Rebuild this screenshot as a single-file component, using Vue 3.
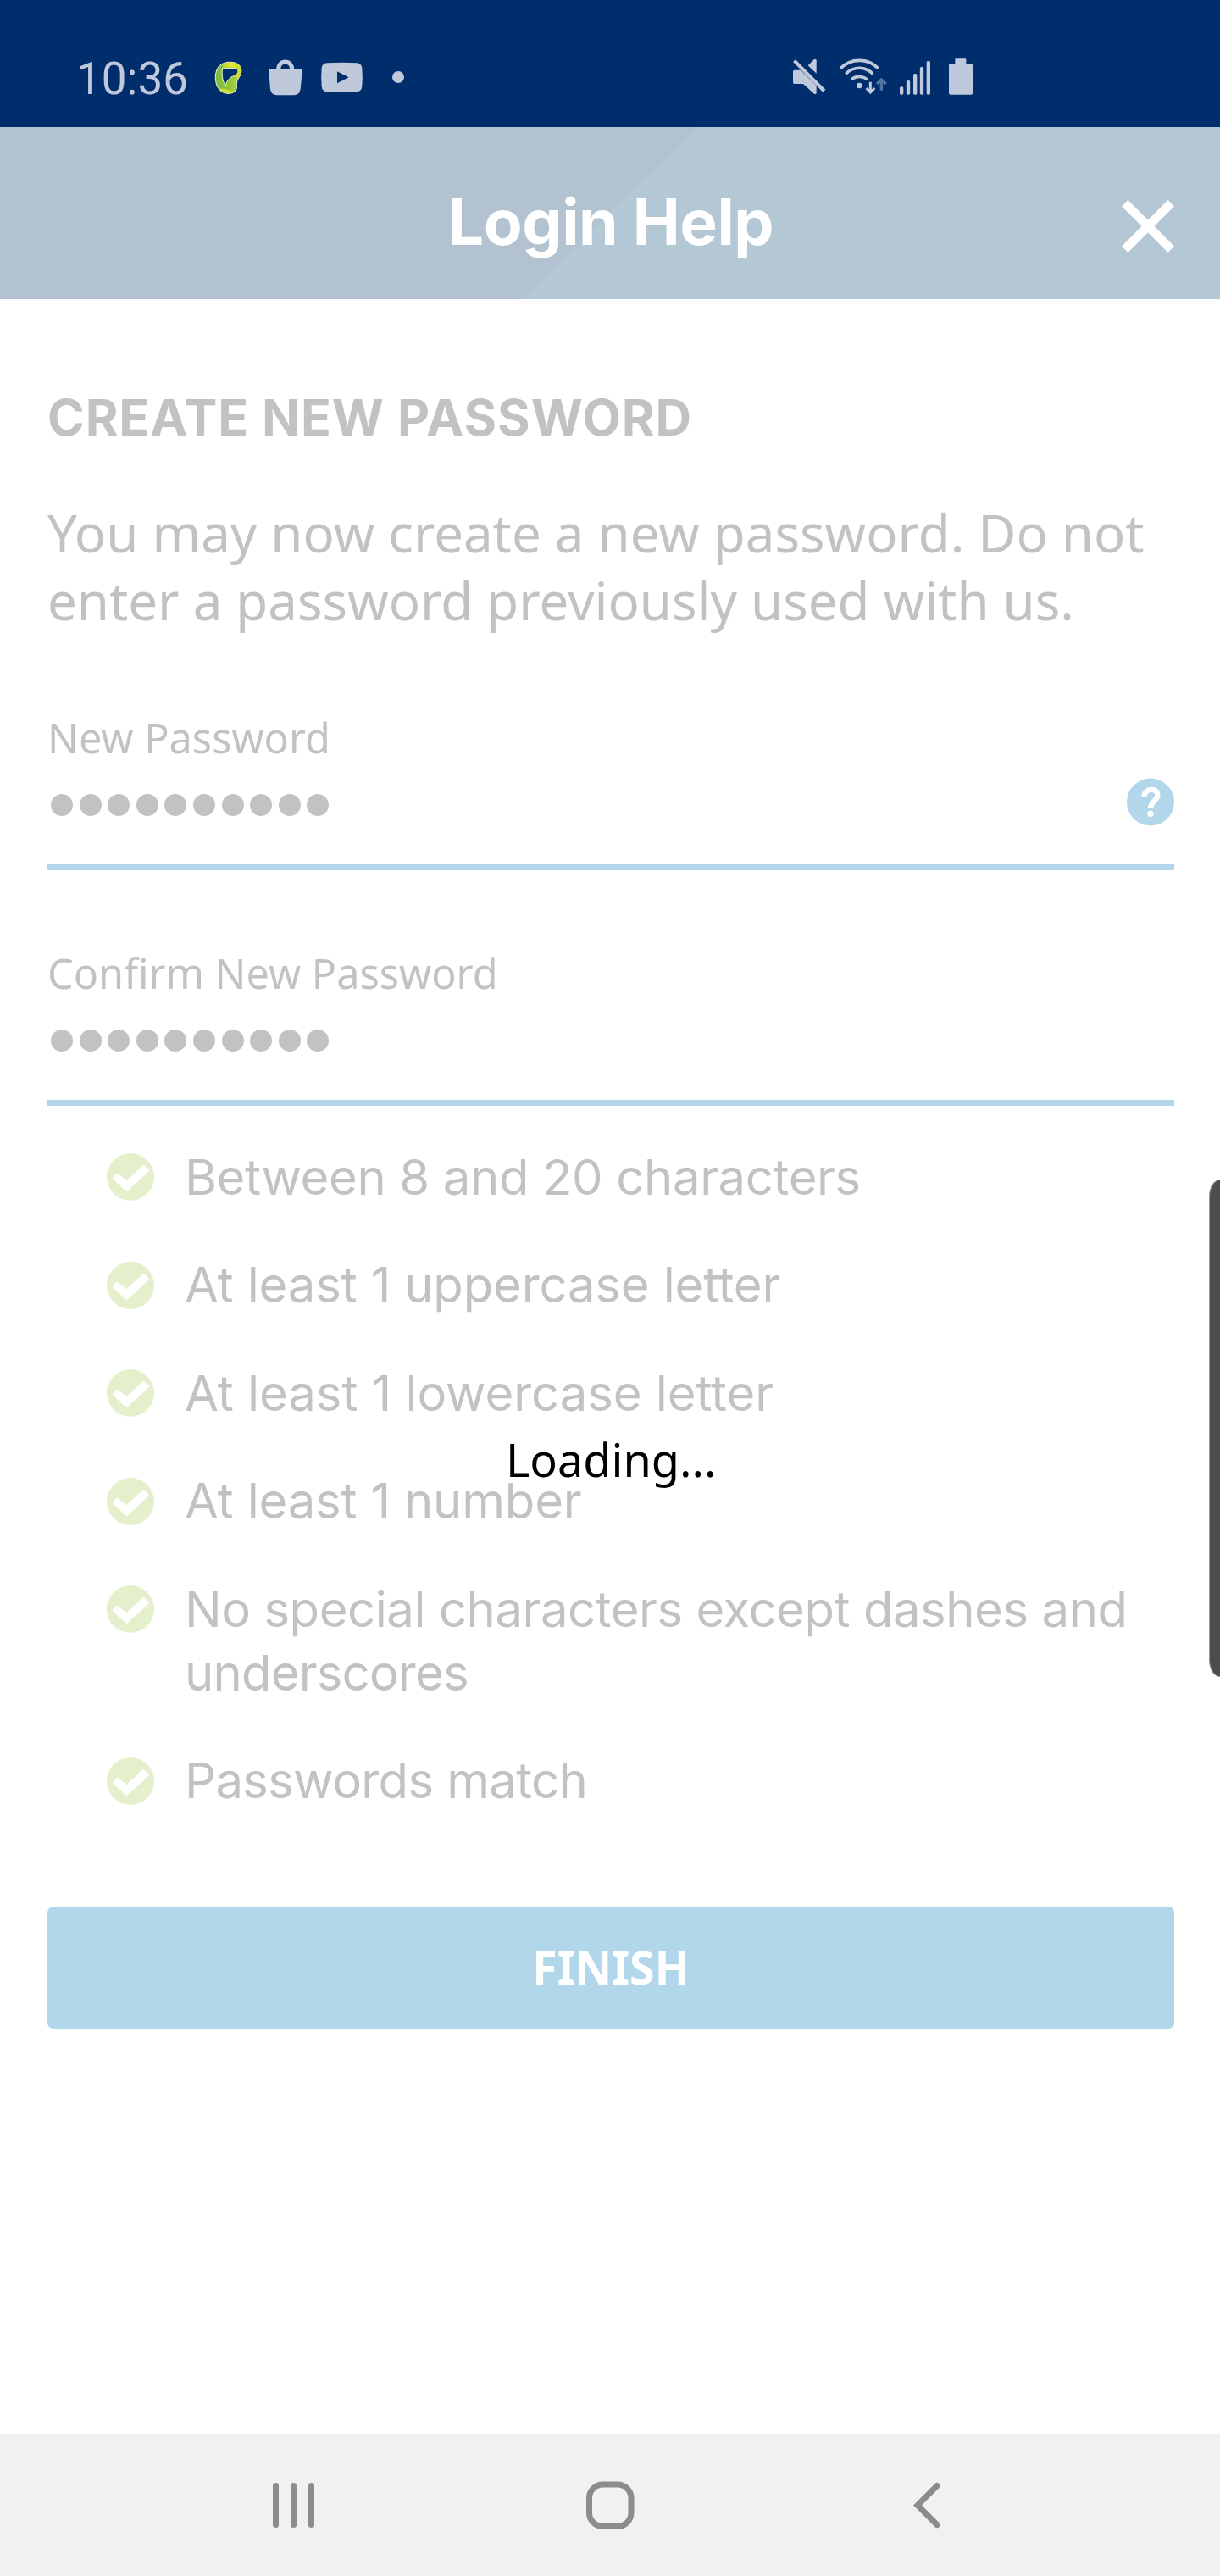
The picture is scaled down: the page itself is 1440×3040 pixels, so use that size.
<script setup>
const rules = [
  [{ text: 'Between 8 and 20 characters', tracking: -0.36 }],
  [{ text: 'At least 1 uppercase letter', tracking: -0.16 }],
  [{ text: 'At least 1 lowercase letter', tracking: -0.05 }],
  [{ text: 'At least 1 number', tracking: -0.18 }],
  [
    { text: 'No special characters except dashes and', tracking: -0.45 },
    { text: 'underscores', tracking: -0.8 },
  ],
  [{ text: 'Passwords match', tracking: -0.62 }],
]

const fields = [
  { label: 'New Password', length: 10, help: true },
  { label: 'Confirm New Password', length: 10, help: false },
]
</script>

<template>
  <div class="screen">
    <div class="status">
      <span class="clock">10:36</span>
      <svg class="logo" width="36" height="60" viewBox="576 69 108 180">
        <defs>
          <linearGradient id="ring" x1="0" y1="0" x2="1" y2="0">
            <stop offset="0" stop-color="#7dbb42" />
            <stop offset="0.5" stop-color="#8fc43f" />
            <stop offset="1" stop-color="#b5d334" />
          </linearGradient>
          <linearGradient id="fold" x1="0" y1="0" x2="1" y2="0">
            <stop offset="0" stop-color="#a8cf38" />
            <stop offset="0.45" stop-color="#e6e72e" />
            <stop offset="1" stop-color="#c9dc30" />
          </linearGradient>
        </defs>
        <path fill="url(#ring)" stroke="#eef5cf" stroke-width="3" fill-rule="evenodd" d="M612 104C622 98 650 98 661 106C673 113 676 124 674 138C672 152 658 160 658 174C658 184 660 192 655 200C648 209 636 212 624 211C598 208 583 186 583 155C583 128 593 110 612 104ZM608 122L657 122Q664 124 663 135C661 145 643 149 635 156C624 165 621 172 619 184C606 165 605 140 608 122Z" />
        <path fill="url(#fold)" d="M606 108C616 99 650 99 660 107C672 114 674 124 672 137C670 147 664 152 660 158L652 149C663 143 667 133 661 119L610 118Z" />
        <path fill="#cfdf2f" d="M592 189C604 199 614 190 630 199C640 204 650 202 656 196C652 206 640 210 624 209C610 207 600 201 592 189Z" />
      </svg>
      <svg class="bag" width="42" height="60" viewBox="768 69 126 180">
        <path fill="none" stroke="#bfc9db" stroke-width="15" d="M806 128C804 89 856 89 854 128" />
        <path fill="#bfc9db" d="M771 124H891L884 195Q881 217 862 217H800Q780 217 777 195Z" />
      </svg>
      <svg class="tube" width="51" height="60" viewBox="954 69 153 180">
        <path fill="#bfc9db" fill-rule="evenodd" d="M978 103Q1030 100 1083 103Q1100 104 1102 121Q1105 154 1102 187Q1100 204 1083 205Q1030 208 978 205Q961 204 959 187Q956 154 959 121Q961 104 978 103ZM1014 133V175L1055 154Z" />
      </svg>
      <svg class="more" width="16" height="60" viewBox="1206 69 48 180">
        <circle cx="1230" cy="153" r="21" fill="#bfc9db" />
      </svg>

      <svg class="mute" width="40" height="60" viewBox="105 69 120 180" fill="#bfc9db">
        <path d="M117 91L223 197L214 206L108 99Z" />
        <path d="M113 128H135L191 184V209Q190 215 183 212L144 177H113Q108 177 108 172V133Q108 128 113 128Z" />
        <path d="M161 112L182 91Q190 86 191 94V140Z" />
      </svg>
      <svg class="wifi" width="57" height="60" viewBox="270 69 171 180" fill="none" stroke="#bfc9db" stroke-width="11">
        <path d="M276 122A94 94 0 0 1 410 122M295 142A65 65 0 0 1 391 142M315 162A42 42 0 0 1 371 162" />
        <circle cx="343" cy="183" r="10" fill="#bfc9db" stroke="none" />
        <path stroke-width="9" d="M382 170V206M368 192L382 207L397 192" />
        <path stroke="#5672a2" stroke-width="10" d="M421 200V163M405 177L421 162L437 177" />
      </svg>
      <svg class="signal" width="38" height="60" viewBox="483 69 114 180" fill="#bfc9db">
        <rect x="486" y="187" width="13" height="28" rx="5" />
        <rect x="509.500" y="165" width="13" height="50" rx="5" />
        <rect x="534" y="141" width="13" height="74" rx="5" />
        <rect x="557.500" y="117" width="13" height="98" rx="5" />
        <rect x="581" y="96" width="13" height="119" rx="5" />
      </svg>
      <svg class="battery" width="30" height="60" viewBox="657 69 90 180" fill="#bfc9db">
        <rect x="682" y="88" width="39" height="30" rx="3" />
        <rect x="660" y="106" width="84" height="109" rx="5" />
      </svg>
    </div>

    <header class="header">
      <span></span>
      <h1>Login Help</h1>
      <svg class="close" width="62" height="62" viewBox="0 0 62 62" stroke="#fff" stroke-width="10.400">
        <path d="M3.700 3.700L58.300 58.300M58.300 3.700L3.700 58.300" />
      </svg>
    </header>

    <main class="content">
      <h2>CREATE NEW PASSWORD</h2>
      <p class="intro">You may now create a new password. Do not<br />enter a password previously used with us.</p>

      <div v-for="field in fields" :key="field.label" class="field">
        <label>{{ field.label }}</label>
        <div class="entry">
          <div class="dots"><i v-for="n in field.length" :key="n"></i></div>
          <svg v-if="field.help" width="56" height="57" viewBox="270 234 168 171">
            <circle cx="354" cy="319.500" r="84" fill="#b2d7eb" />
            <path fill="none" stroke="#fff" stroke-width="19" d="M331 303C331 269 380 267 379 296C378 316 354 317 354 341" />
            <circle cx="354" cy="361" r="11" fill="#fff" />
          </svg>
        </div>
      </div>

      <ul class="rules">
        <li v-for="(rule, i) in rules" :key="i">
          <svg width="56" height="56" viewBox="0 0 56 56">
            <circle cx="28" cy="28" r="28" fill="#e4f0cb" />
            <path fill="#fff" stroke="#fff" stroke-width="3" stroke-linejoin="round" d="M8.500 29.500L12 25.500L23.400 34L43.200 15.500L48.500 20.500L23.400 43.500Z" />
          </svg>
          <div>
            <div v-for="line in rule" :key="line.text" :style="{ letterSpacing: line.tracking + 'px' }">{{ line.text }}</div>
          </div>
        </li>
      </ul>

      <button class="finish" type="button">FINISH</button>
    </main>

    <nav class="nav">
      <svg width="60" height="60" viewBox="0 0 60 60" fill="#8c8c8c">
        <rect x="6" y="4" width="7" height="53" rx="3.500" />
        <rect x="27" y="4" width="7" height="53" rx="3.500" />
        <rect x="48" y="4" width="7" height="53" rx="3.500" />
      </svg>
      <svg width="60" height="60" viewBox="0 0 60 60">
        <rect x="5.500" y="6" width="49.500" height="49.500" rx="16" fill="none" stroke="#8c8c8c" stroke-width="7" />
      </svg>
      <svg width="60" height="60" viewBox="0 0 60 60">
        <path fill="none" stroke="#8c8c8c" stroke-width="7" stroke-linecap="round" d="M42 7.500L19 30.500L42 53.500" />
      </svg>
    </nav>

    <div class="loading">Loading...</div>
    <div class="edge-handle"></div>
  </div>
</template>

<style>
body {
  background: #fff;
}
</style>

<style scoped>
.screen {
  position: relative;
  display: flex;
  flex-direction: column;
  width: 1440px;
  height: 3040px;
  overflow: hidden;
  background: #fff;
  color: #c2c2c2;
  font-family: "Noto Sans", sans-serif;
}
svg {
  display: block;
  flex: none;
}
h1, h2, p, ul {
  margin: 0;
  padding: 0;
}
.status {
  display: flex;
  align-items: center;
  height: 150px;
  box-sizing: border-box;
  padding: 36px 0 0 90px;
  background: #002e6d;
}
.clock {
  width: 132px;
  font: 400 53px/60px Roboto, sans-serif;
  color: #bfc9db;
}
.logo { margin-left: 30px; }
.bag { margin-left: 28px; }
.tube { margin-left: 20px; }
.more { margin-left: 33px; }
.mute { margin-left: 457px; }
.wifi { margin-left: 15px; }
.signal { margin-left: 14px; }
.battery { margin-left: 20px; }

.header {
  display: grid;
  grid-template-columns: 1fr auto 1fr;
  align-items: center;
  height: 203px;
  box-sizing: border-box;
  padding: 21px 54px 0 56px;
  background: linear-gradient(135.300deg, #b2c2d0 0, #b2c2d0 50%, #b3c7d4 50%);
}
.header h1 {
  font: 700 75px/90px Inter, sans-serif;
  letter-spacing: -0.45px;
  color: #fff;
}
.close {
  justify-self: end;
  margin-top: 10px;
}
.content {
  flex: 1;
  padding: 105px 54px 0 56px;
}
h2 {
  font: 700 59px/70px Inter, sans-serif;
  letter-spacing: 0.98px;
}
.intro {
  margin-top: 60px;
  font-size: 61.75px;
  line-height: 80px;
  white-space: nowrap;
}
.field {
  margin-top: 91px;
  padding-bottom: 45px;
  border-bottom: 7px solid #b2d7eb;
}
.intro + .field {
  margin-top: 92px;
}
.field label {
  display: block;
  font-size: 48.6px;
  line-height: 60px;
}
.entry {
  display: flex;
  align-items: center;
  justify-content: space-between;
  height: 57px;
  margin-top: 18px;
}
.dots {
  display: flex;
  gap: 7.6px;
  padding: 7px 0 0 4px;
}
.dots i {
  width: 26px;
  height: 26px;
  border-radius: 50%;
  background: #c2c2c2;
}
.rules {
  display: flex;
  flex-direction: column;
  gap: 52.5px;
  margin-top: 46.6px;
  padding-left: 70px;
  list-style: none;
  font: 400 58px/75px Inter, sans-serif;
  white-space: nowrap;
}
.rules li {
  display: flex;
  align-items: flex-start;
  gap: 36px;
}
.rules svg {
  margin-top: 9.6px;
}
.finish {
  display: block;
  width: 1330px;
  height: 144px;
  margin-top: 110.9px;
  padding: 1px 0 0;
  border: 0;
  border-radius: 7px;
  background: #b2d7eb;
  color: #fff;
  font: 700 53.7px/70px "Noto Sans", sans-serif;
}
.nav {
  display: flex;
  align-items: center;
  justify-content: center;
  gap: 314px;
  height: 168px;
  background: #f1f1f1;
}
.loading {
  position: absolute;
  top: 1687px;
  left: 597px;
  font-size: 54px;
  line-height: 70px;
  color: #000;
}
.edge-handle {
  position: absolute;
  top: 1392px;
  right: 0;
  width: 13px;
  height: 587px;
  box-sizing: border-box;
  border: 1.5px solid #9a9a9a;
  border-right: 0;
  border-radius: 13px 0 0 13px / 20px 0 0 20px;
  background: #4d4d4d;
}
</style>
